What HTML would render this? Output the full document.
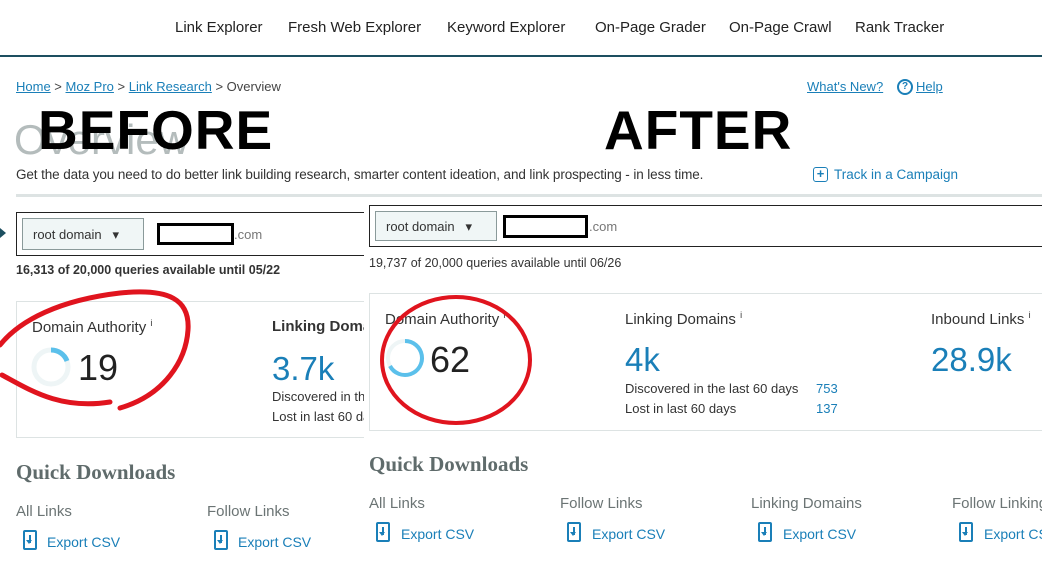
<!DOCTYPE html>
<html><head><meta charset="utf-8"><style>
*{margin:0;padding:0;box-sizing:border-box}
body{width:1042px;height:580px;overflow:hidden;background:#fff;font-family:"Liberation Sans",sans-serif;position:relative;color:#333}
.a{position:absolute;white-space:nowrap}
.nav{font-size:15px;color:#222;top:19px}
.lnk{color:#1a7fb8;text-decoration:underline}
.blue{color:#1a7fb8}
.qd{font-family:"Liberation Serif",serif;font-weight:bold;font-size:21px;color:#5f6b6b}
.lab{font-size:15px;color:#6b7474}
.exp{font-size:14px;color:#1a7fb8}
.ic{position:absolute;width:14px;height:20px;border:2px solid #1a7fb8;border-radius:2px}
.ic:after{content:"";position:absolute;left:4px;top:3px;width:2px;height:8px;background:#1a7fb8}
.ic:before{content:"";position:absolute;left:1px;top:8px;border:3px solid transparent;border-top:4px solid #1a7fb8}
.big{font-size:55px;font-weight:bold;color:#000;letter-spacing:1px}
</style></head><body>
<div class="a nav" style="left:175px">Link Explorer</div>
<div class="a nav" style="left:288px">Fresh Web Explorer</div>
<div class="a nav" style="left:447px">Keyword Explorer</div>
<div class="a nav" style="left:595px">On-Page Grader</div>
<div class="a nav" style="left:729px">On-Page Crawl</div>
<div class="a nav" style="left:855px">Rank Tracker</div>
<div class="a" style="left:0;top:55px;width:1042px;height:2px;background:#1d4f60"></div>

<div class="a" style="left:16px;top:79px;font-size:13px;color:#444"><span class="lnk">Home</span> &gt; <span class="lnk">Moz Pro</span> &gt; <span class="lnk">Link Research</span> &gt; Overview</div>
<div class="a" style="left:807px;top:79px;font-size:13px"><span class="lnk">What's New?</span></div>
<div class="a" style="left:897px;top:79px;width:16px;height:16px;border:2px solid #1a7fb8;border-radius:50%;font-size:10px;font-weight:bold;color:#1a7fb8;text-align:center;line-height:12px">?</div>
<div class="a" style="left:916px;top:79px;font-size:13px"><span class="lnk">Help</span></div>
<div class="a" style="left:14px;top:116px;font-size:42px;color:#b4bcbc">Overview</div>
<div class="a big" style="left:38px;top:98px">BEFORE</div>
<div class="a big" style="left:604px;top:98px">AFTER</div>
<div class="a" style="left:16px;top:167px;font-size:13.5px;color:#333;letter-spacing:-0.1px">Get the data you need to do better link building research, smarter content ideation, and link prospecting - in less time.</div>
<div class="a" style="left:813px;top:167px;width:15px;height:15px;border:1.5px solid #1a7fb8;border-radius:3px;color:#1a7fb8;font-size:13px;font-weight:bold;text-align:center;line-height:12px">+</div>
<div class="a blue" style="left:834px;top:167px;font-size:13.5px">Track in a Campaign</div>
<div class="a" style="left:16px;top:194px;width:1026px;height:3px;background:#dde3e3"></div>

<!-- BEFORE -->
<div class="a" style="left:0;top:228px;border:5px solid transparent;border-left:6px solid #1d4f60"></div>
<div class="a" style="left:16px;top:212px;width:360px;height:44px;border:1px solid #222"></div>
<div class="a" style="left:22px;top:218px;width:122px;height:32px;border:1px solid #8a9a9a;background:#f0f6f6;font-size:13px;padding:8px 10px;color:#333">root domain&nbsp;&nbsp;&nbsp;▾</div>
<div class="a" style="left:157px;top:223px;width:77px;height:22px;border:3px solid #000;background:#fff"></div>
<div class="a" style="left:234px;top:227px;font-size:13px;color:#777">.com</div>
<div class="a" style="left:16px;top:263px;font-size:12.5px;font-weight:bold;color:#333">16,313 of 20,000 queries available until 05/22</div>
<div class="a" style="left:16px;top:301px;width:360px;height:137px;border:1px solid #dde3e3"></div>
<div class="a" style="left:32px;top:318px;font-size:15px;color:#333">Domain Authority <sup style="font-size:9px">i</sup></div>
<svg class="a" style="left:30px;top:345px" width="44" height="44"><circle cx="21" cy="22" r="17" fill="none" stroke="#eef5f6" stroke-width="5"/><path d="M21 5 A17 17 0 0 1 37 16" fill="none" stroke="#5bc0eb" stroke-width="5"/></svg>
<div class="a" style="left:78px;top:347px;font-size:36px;color:#222">19</div>
<div class="a" style="left:272px;top:318px;font-size:15px;font-weight:bold;color:#333">Linking Domains</div>
<div class="a blue" style="left:272px;top:350px;font-size:33px">3.7k</div>
<div class="a" style="left:272px;top:389px;font-size:13px">Discovered in the last</div>
<div class="a" style="left:272px;top:409px;font-size:13px">Lost in last 60 days</div>
<div class="a qd" style="left:16px;top:460px">Quick Downloads</div>
<div class="a lab" style="left:16px;top:503px">All Links</div>
<div class="ic" style="left:23px;top:530px"></div>
<div class="a exp" style="left:47px;top:534px">Export CSV</div>
<div class="a lab" style="left:207px;top:503px">Follow Links</div>
<div class="ic" style="left:214px;top:530px"></div>
<div class="a exp" style="left:238px;top:534px">Export CSV</div>

<!-- AFTER -->
<div class="a" style="left:364px;top:198px;width:678px;height:382px;background:#fff"></div>
<div class="a" style="left:369px;top:205px;width:680px;height:42px;border:1px solid #222"></div>
<div class="a" style="left:375px;top:211px;width:122px;height:30px;border:1px solid #8a9a9a;background:#f0f6f6;font-size:13px;padding:7px 10px;color:#333">root domain&nbsp;&nbsp;&nbsp;▾</div>
<div class="a" style="left:503px;top:215px;width:85px;height:23px;border:3px solid #000;background:#fff"></div>
<div class="a" style="left:589px;top:219px;font-size:13px;color:#777">.com</div>
<div class="a" style="left:369px;top:256px;font-size:12.5px;color:#333">19,737 of 20,000 queries available until 06/26</div>
<div class="a" style="left:369px;top:293px;width:680px;height:138px;border:1px solid #dde3e3"></div>
<div class="a" style="left:385px;top:310px;font-size:15px;color:#333">Domain Authority <sup style="font-size:9px">i</sup></div>
<svg class="a" style="left:385px;top:338px" width="44" height="44"><circle cx="20" cy="20" r="17" fill="none" stroke="#eef5f6" stroke-width="4"/><path d="M20 3 A17 17 0 1 1 5 28" fill="none" stroke="#5bc0eb" stroke-width="4"/></svg>
<div class="a" style="left:430px;top:339px;font-size:36px;color:#222">62</div>
<div class="a" style="left:625px;top:310px;font-size:15px;color:#333">Linking Domains <sup style="font-size:9px">i</sup></div>
<div class="a blue" style="left:625px;top:341px;font-size:33px">4k</div>
<div class="a" style="left:625px;top:381px;font-size:13px">Discovered in the last 60 days</div>
<div class="a blue" style="left:816px;top:381px;font-size:13px">753</div>
<div class="a" style="left:625px;top:401px;font-size:13px">Lost in last 60 days</div>
<div class="a blue" style="left:816px;top:401px;font-size:13px">137</div>
<div class="a" style="left:931px;top:310px;font-size:15px;color:#333">Inbound Links <sup style="font-size:9px">i</sup></div>
<div class="a blue" style="left:931px;top:341px;font-size:33px">28.9k</div>
<div class="a qd" style="left:369px;top:452px">Quick Downloads</div>
<div class="a lab" style="left:369px;top:495px">All Links</div>
<div class="ic" style="left:376px;top:522px"></div>
<div class="a exp" style="left:401px;top:526px">Export CSV</div>
<div class="a lab" style="left:560px;top:495px">Follow Links</div>
<div class="ic" style="left:567px;top:522px"></div>
<div class="a exp" style="left:592px;top:526px">Export CSV</div>
<div class="a lab" style="left:751px;top:495px">Linking Domains</div>
<div class="ic" style="left:758px;top:522px"></div>
<div class="a exp" style="left:783px;top:526px">Export CSV</div>
<div class="a lab" style="left:952px;top:495px">Follow Linking</div>
<div class="ic" style="left:959px;top:522px"></div>
<div class="a exp" style="left:984px;top:526px">Export CSV</div>

<!-- red marks -->
<svg class="a" style="left:0;top:0" width="1042" height="580">
<path d="M0 345 C20 320,60 300,120 293 C170 288,190 300,188 330 C186 360,165 395,120 408 M2 375 C30 390,60 410,110 402" fill="none" stroke="#e0141e" stroke-width="5" stroke-linecap="round"/>
<ellipse cx="456" cy="360" rx="74" ry="63" fill="none" stroke="#e0141e" stroke-width="4"/>
</svg>
</body></html>
